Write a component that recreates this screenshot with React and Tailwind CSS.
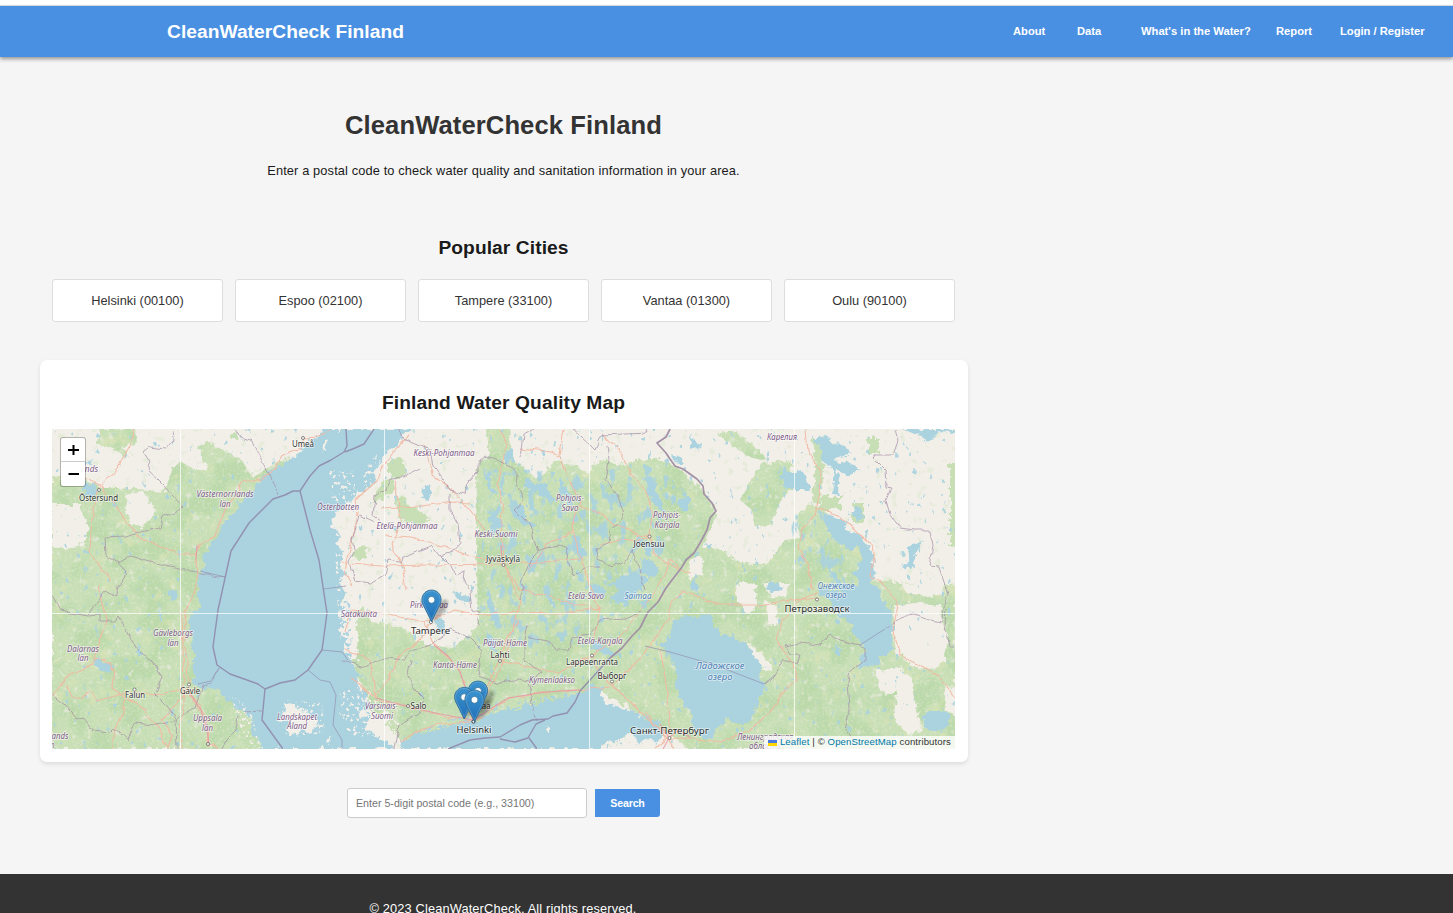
import React from "react";

const SANS = "font-['Liberation_Sans',Arial,sans-serif]";

const NAV = [
  { label: "About", width: "w-16" },
  { label: "Data", width: "w-16" },
  { label: "What's in the Water?", width: "w-[135px]" },
  { label: "Report", width: "w-16" },
  { label: "Login / Register", width: "w-[113px]" },
];

const CITIES = [
  "Helsinki (00100)",
  "Espoo (02100)",
  "Tampere (33100)",
  "Vantaa (01300)",
  "Oulu (90100)",
];

const GREEN_AREAS = [
  "M52 476L85 480L100 488L125 488L165 492L172 470L180 461L195 470L208 470L199 448L206 440L224 450L243 462L253 478L275 463L290 455L285 500L240 560L215 600L225 680L270 749L52 749Z",
  "M100 429L135 429L137 442L122 446L128 458L112 448L98 444Z",
  "M476 465L490 455L486 429L508 429L513 460L536 478L548 472L553 460L575 465L589 475L592 464L605 460L618 466L640 460L660 460L678 468L703 490L716 512L710 530L702 545L722 550L740 562L766 566L785 540L800 538L797 515L812 503L830 515L860 545L868 580L955 585L955 749L690 749L640 715L600 690L560 710L470 728L400 740L372 710L352 660L345 615L362 608L372 622L400 626L425 645L455 648L478 625Z",
  "M740 500L762 463L788 460L782 480L781 500L770 525L755 527L752 510Z",
  "M717 433L735 431L752 445L768 460L752 458L738 449Z",
  "M820 497h21v13h-21z",
  "M853 503h11v19h-11z",
  "M868 437h10v17h-10z",
  "M950 463h8v83h-8z",
  "M812 436L820 438L824 470L819 505L812 500L815 470Z",
  "M388 460L400 457L406 472L398 478L388 474Z",
  "M360 545L368 547L366 560L352 558Z",
  "M384 480L393 476L396 490L384 496L376 505L373 498Z",
  "M395 497L405 497L410 506L432 520L420 526L400 520Z",
  "M230 434L240 434L238 440L230 440Z",
  "M330 478L344 473L350 486L340 492L333 487Z",
  "M770 470L790 462L792 490L778 500Z",
];

const CREAM_HOLES = [
  "M52 505L80 505L89 530L84 542L70 549L52 545Z",
  "M127 494L144 492L156 515L142 526L132 526L126 510Z",
  "M735 583L756 583L757 605L748 614L737 600Z",
  "M766 600L778 607L776 626L768 624Z",
  "M765 583L790 583L786 596L770 597Z",
  "M895 606L914 602L940 605L946 640L945 660L935 669L918 668L898 655L893 630Z",
  "M876 670L900 668L912 680L914 700L922 728L912 736L900 728L894 712L898 690L888 695L879 690Z",
  "M945 688L956 686V713L946 712Z",
  "M745 640L768 660L772 670L760 668Z",
  "M901 583L943 583L944 596L924 597L903 592Z",
  "M690 560L704 555L702 575L688 580Z",
  "M343 612L356 612L358 660L350 662Z",
  "M640 725L655 722L660 749L642 749Z",
];

const GULF =
  "M323 429L318 438L303 447L295 457L286 461L281 466L273 467L268 474L262 478L256 484L252 492L245 494L243 502L238 506L235 513L228 516L226 523L220 526L222 533L212 541L208 550L202 556L204 566L199 574L199 588L197 596L203 606L198 610L192 612L190 620L192 632L191 645L195 658L192 668L195 675L191 682L196 687L207 689L220 690L224 698L232 702L236 708L248 712L251 722L252 733L260 742L262 749L400 749L403 741L412 736L425 733L438 731L448 726L460 724L466 720L476 722L484 716L496 714L502 710L514 711L526 705L538 705L545 700L558 699L574 695L582 694L588 686L593 682L596 690L604 684L600 696L604 703L618 707L634 711L640 717L650 718L660 724L663 736L656 742L650 738L640 744L636 738L628 733L620 740L606 742L598 749L398 749L370 732L364 726L372 718L366 710L374 706L364 700L368 694L358 690L358 680L362 674L354 668L350 658L344 650L346 640L340 632L344 622L340 612L342 600L346 592L340 585L345 574L340 566L343 552L335 543L340 533L332 525L334 513L344 508L352 500L358 492L370 487L376 480L374 472L383 462L385 452L396 446L400 440L412 429Z";

const LAKES = [
  "M685 614L697 618L704 613L712 617L715 627L722 633L733 638L745 643L752 652L758 661L761 670L760 680L766 687L762 696L757 701L756 711L749 723L742 725L733 720L725 718L721 727L715 729L713 738L706 740L699 736L694 728L690 714L684 704L678 694L675 684L679 675L675 668L672 656L663 650L660 645L667 640L669 632L674 628L670 622L680 619Z",
  "M820 512L832 516L845 523L850 532L862 537L868 546L874 553L872 563L875 574L871 582L879 590L883 602L890 612L894 630L890 640L893 650L886 655L880 656L876 666L868 665L860 668L859 660L865 651L860 640L852 633L854 625L842 617L832 607L829 600L820 594L817 590L824 588L836 590L842 594L834 580L826 566L840 578L852 588L859 583L853 575L859 566L862 558L856 546L846 552L838 540L832 538Z",
  "M902 429H955V433L937 432L935 438L927 442L921 435L908 432Z",
  "M782 467L790 472L803 470L806 480L812 490L798 490L784 488L781 478Z",
  "M815 437L829 436L832 442L842 445L851 454L840 457L833 461L855 464L860 470L850 476L838 470L828 467L820 458L822 452Z",
  "M832 465L839 475L838 495L833 494L835 480Z",
  "M908 547L918 543L924 540L914 555L915 562L911 569L903 568L908 560Z",
  "M923 722Q921 710 936 710Q951 710 950 722Q948 731 936 731Q925 731 923 722Z",
  "M855 506L860 508L863 518L858 520L852 513Z",
  "M485 468L491 474L490 484L496 494L490 493Z",
  "M505 452L514 447L512 463L504 465Z",
  "M488 519L498 506L502 500L498 516L504 528L494 530Z",
  "M514 499L526 510L522 516L538 526L530 527L515 517Z",
  "M525 478L545 486L556 501L550 503L540 494L524 487Z",
  "M560 478L568 490L574 505L568 503L560 492Z",
  "M573 532L580 544L588 555L582 560L573 549Z",
  "M486 585L490 595L494 610L500 622L492 620L488 604Z",
  "M486 630L494 638L498 655L492 652L487 642Z",
  "M422 491L428 483L432 494L428 500L424 499Z",
  "M645 477L654 480L659 498L665 512L658 508L648 497Z",
  "M646 537L655 545L650 558L644 553Z",
  "M672 455L681 459L683 465L675 463Z",
  "M690 435L700 445L699 450L691 445Z",
  "M680 499L690 496L689 508L684 513L679 506Z",
  "M640 560L650 561L660 568L655 577L643 574Z",
  "M610 585L625 575L638 571L648 580L634 597L620 605L610 597L622 590Z",
  "M585 582L600 586L606 596L596 594Z",
  "M594 640L606 645L618 656L600 654L592 648Z",
  "M545 586L552 596L556 610L549 604Z",
  "M93 660L98 657L103 663L113 666L111 674L104 672L98 668Z",
  "M80 481L92 483L97 490L92 497L84 492Z",
  "M167 593L178 590L180 597L172 602Z",
  "M690 581L696 580L699 592L692 590Z",
  "M640 602L646 599L649 607L641 610Z",
  "M835 644L842 650L840 656L834 652Z",
  "M768 583L780 583L781 590L772 592L767 588Z",
  "M436 618L446 621L444 634L437 629Z",
  "M454 592L470 596L470 604L460 602Z",
  "M158 600L160 612L163 625L158 617Z",
  "M138 642L141 655L137 655Z",
];

const ISLANDS = [
  "M286 705L295 703L300 710L308 712L318 722L310 734L302 729L296 736L285 730L290 720L277 722L284 714Z",
  "M324 438L328 440L327 448L322 453L324 446Z",
  "M352 500L358 498L354 506Z",
  "M358 712L364 708L367 714L360 719Z",
  "M370 722L378 720L380 727L372 727Z",
  "M326 738L331 736L331 741L327 742Z",
  "M380 715L388 712L390 720L383 722Z",
  "M545 726L549 729L548 733L545 730Z",
];

const ROADS = [
  "M330 429L318 437L304 438L300 448L283 455L275 468L263 478L242 482L236 495L226 508L219 525L215 535L199 545L196 556L197 580L192 598L186 612L184 640L187 660L188 682L190 692L200 705L207 720L209 746",
  "M85 478L98 483L104 492L115 505L125 520L137 535L150 542L166 548L180 554L196 554",
  "M135 429L128 450L118 467L106 480L98 490L92 520L90 550L96 562L110 578L110 582",
  "M98 585L101 600L106 620L100 640L95 660L84 670L68 675L60 685L54 697",
  "M66 684L72 698L80 698L90 692L97 701L112 697L125 692L140 693L155 695L170 692L188 688",
  "M96 658L110 664L114 672L112 688L126 697L122 716L114 732L112 749",
  "M127 697L145 710L158 728L168 749",
  "M182 613L184 684L182 720L180 749",
  "M187 690L162 720L172 735L168 749",
  "M188 691L199 710L205 720L209 744L218 749",
  "M500 429L506 445L502 465L498 485L503 510L501 535L503 560L510 578L520 600L515 620L510 640L505 660L492 685L473 720",
  "M410 434L395 450L384 465L378 480L355 500L358 515L352 540L345 570L352 587",
  "M425 445L432 475L440 481L455 493L470 510L485 530",
  "M380 508L420 506L455 502L470 503",
  "M394 480L398 500L401 522L392 545L402 565L406 590",
  "M384 535L410 537L440 545L470 556L500 562",
  "M342 562L380 566L430 565L500 564L540 562L580 560",
  "M503 563L520 590L545 595L560 600L585 605L600 610",
  "M564 429L560 455L570 480L580 500L572 525L578 550L585 570L592 590L600 612L594 640",
  "M520 448L545 451L560 456",
  "M580 505L605 515L612 524L640 535L650 537",
  "M603 433L622 455L632 475L645 490L652 515L650 535L655 555L675 568L690 573",
  "M572 532L545 545L540 555L528 570",
  "M600 545L620 540L650 538",
  "M425 622L430 635L434 645L448 658L460 672L466 690L472 720",
  "M431 624L420 640L400 655L388 680L376 697",
  "M375 700L405 706L430 713L455 718L473 721",
  "M473 721L490 712L508 698L520 697L545 692L578 690L610 687",
  "M473 720L485 695L495 670L500 660L505 640L520 620",
  "M500 660L530 667L560 672L593 655L618 640L640 610L660 585L670 560L682 570",
  "M345 632L352 610L384 614L425 622L455 610L480 615L510 612L560 613L600 608",
  "M345 650L370 660L376 697L350 678",
  "M400 741L430 725L470 722",
  "M593 655L600 675L612 685L640 712L668 735",
  "M612 685L635 664L655 640L668 620L672 602L682 590L720 605L760 605L790 600L818 598",
  "M660 648L664 670L668 700L670 720L668 735",
  "M668 740L690 738L720 742L750 730L770 712L785 690L798 678L790 660L776 640L782 620L800 600L818 592",
  "M806 429L808 450L821 472L818 500L815 515L802 528L798 548L810 570L812 590",
  "M818 508L838 515L855 530L872 545L874 560L870 575L885 587L898 605L893 630L900 655L920 665L940 678L950 690L955 698",
  "M668 738L660 730L645 712",
  "M668 738L676 749M668 738L655 749",
];

const BORDERS = [
  "M173 429L174 440L166 450L150 448L144 453L150 462L147 470L160 482L175 498L184 508L163 518L160 528L140 532L126 537L105 538L106 555L117 563L130 556L150 562L180 568L200 573L225 577",
  "M117 563L126 570L124 580L116 590L117 597L105 592L94 607L88 614",
  "M52 595L60 610L88 615L100 614L100 621L117 621L118 615L130 635L137 650L152 660L162 676L157 690L154 693L168 707L176 720L177 749",
  "M52 695L65 705L76 718L82 717L92 730L110 732L114 728L128 740L135 723L155 725L172 722L182 714L195 708L203 684L212 682L219 668",
  "M235 429L240 438L252 442L262 462L270 478L279 495",
  "M244 712L262 711M238 715L236 730L228 738L222 749",
  "M398 429L405 440L420 446L430 449L433 466L443 480L450 490L465 494L467 482L478 470L478 462L485 456L503 463L515 469L518 475L517 485L524 500L515 510L525 520L532 530L534 540L538 552L530 560L524 575L520 582L524 590L520 600",
  "M420 468L408 474L404 477L390 478L386 490L375 497L373 515L384 523",
  "M450 493L450 510L458 525L460 543L452 552L440 556L433 546L415 553L402 558L400 562L388 560L385 575L370 584L355 582L350 560L354 550L352 540L360 516L375 523",
  "M440 555L450 565L455 575L465 570L464 582L470 590L472 610L480 612L478 625",
  "M520 457L523 435L533 429M572 429L590 445L595 450L602 435L648 433L647 429",
  "M607 445L609 460L606 480L617 495L623 510L624 518L610 530L608 543L597 550L598 560L612 567L625 562L632 550L640 572L645 590",
  "M538 552L545 547L560 545L568 548L567 560L575 575L588 567L600 567",
  "M411 660L408 675L415 690L425 700L420 712L400 725L395 749",
  "M340 660L365 667L375 662L388 658L405 660L410 650L430 645L450 630L470 638L482 650L478 675L500 683L520 680L528 682L530 690",
  "M530 690L533 710L536 720M528 625L525 640L525 660L540 672L533 680L531 690",
  "M528 637L550 640L555 650L568 650L572 638L590 635L600 620L625 618L640 612",
  "M895 429L898 441L893 455L875 455L873 458L885 470L886 487L891 488L886 500L890 515L900 529L915 531L930 531L933 545L930 566L939 567L943 580L948 595L943 607L942 622L930 620L922 618L912 614L900 618L885 629",
  "M785 646L800 643L820 645L830 636L850 643L860 645L865 649L865 660L850 672L848 680L850 710L845 730L855 740",
  "M785 646L790 655L800 655L797 665L783 660L775 675L765 683",
  "M946 610L945 625L950 648L955 648",
];

const SEA_BORDERS = [
  "M346 429L347 446L344 452L331 460L319 466L310 476L300 491L293 491L285 495L273 499L249 523L231 551L218 610L213 647L217 665L230 674L247 680L258 684L265 689L262 720L283 749",
  "M374 429L364 444L355 448L345 452",
  "M300 491L310 530L319 560L323 587L327 613L322 650L308 670L295 680L280 683L265 689",
  "M448 749L470 740L485 738L500 737L520 725L532 720L548 719L553 716L567 713L575 702L580 691L590 680L610 658",
  "M500 739L515 742L528 738L536 724L545 720",
  "M529 738L537 749",
];

const THIN_SEA = [
  "M308 670L320 680L330 682L336 695L333 725L342 740L342 749",
  "M225 577L200 571M198 684L211 681L219 668",
  "M324 589L346 586M322 650L342 652L348 660",
  "M645 646L670 652L715 665L764 684L775 675",
  "M860 645L885 629",
];

const LABELS = [
  ["Umeå", 303, 447, 22, "city"],
  ["Östersund", 98.500, 501, 39, "city"],
  ["Falun", 135, 698, 20, "city"],
  ["Gävle", 190, 693.500, 20, "city"],
  ["Jyväskylä", 503, 562, 34, "city"],
  ["Joensuu", 649, 547, 31, "city"],
  ["Lahti", 500, 658, 19, "city"],
  ["Lappeenranta", 592, 665, 52, "city"],
  ["Выборг", 612, 678.500, 29, "city"],
  ["Salo", 418.500, 709, 16, "city"],
  ["Vantaa", 478, 709, 25, "city"],
  ["Tampere", 430.500, 633.500, 39, "town"],
  ["Helsinki", 474, 733, 35, "town"],
  ["Петрозаводск", 817, 611.500, 65, "town"],
  ["Санкт-Петербург", 669.500, 734, 79, "town"],
  ["Västernorrlands", 225, 497, 57, "area"],
  ["län", 225, 507, 11, "area"],
  ["Gävleborgs", 173, 636, 40, "area"],
  ["län", 173, 646, 11, "area"],
  ["Dalarnas", 83, 651.500, 32, "area"],
  ["län", 83, 661, 11, "area"],
  ["Uppsala", 207.500, 721, 29, "area"],
  ["län", 207.500, 730.500, 11, "area"],
  ["Landskapet", 297, 719.500, 40, "area"],
  ["Åland", 297, 729, 20, "area"],
  ["Österbotten", 338, 510, 42, "area"],
  ["Keski-Pohjanmaa", 444, 455.500, 61, "area"],
  ["Etelä-Pohjanmaa", 407, 528.500, 61, "area"],
  ["Keski-Suomi", 496, 537, 43, "area"],
  ["Pohjois-", 570, 501, 28, "area"],
  ["Savo", 570, 510.500, 17, "area"],
  ["Pohjois-", 667, 518, 28, "area"],
  ["Karjala", 667, 527.500, 25, "area"],
  ["Карелия", 782, 440, 30, "area"],
  ["Pirkanmaa", 429, 607.500, 38, "area"],
  ["Satakunta", 359, 617, 36, "area"],
  ["Etelä-Savo", 586, 598.500, 36, "area"],
  ["Päijät-Häme", 505, 645.500, 44, "area"],
  ["Etelä-Karjala", 600, 643.500, 45, "area"],
  ["Kanta-Häme", 455, 667.500, 44, "area"],
  ["Kymenlaakso", 552, 683, 46, "area"],
  ["Varsinais-", 381.500, 709, 33, "area"],
  ["Suomi", 382, 718.500, 22, "area"],
  ["Ленинградская", 765, 739.500, 56, "area"],
  ["область", 765, 748.500, 32, "area"],
  ["Saimaa", 638, 598.500, 27, "lake"],
  ["Ладожское", 720, 668.500, 49, "biglake"],
  ["озеро", 720, 680, 25, "biglake"],
  ["Онежское", 836, 588.500, 37, "lake"],
  ["озеро", 836, 598, 21, "lake"],
  ["lands", 88, 471.500, 20, "area"],
  ["lands", 59, 739, 19, "area"],
  ["län", 50, 748, 9, "area"],
];

const LABEL_STYLE = {
  city: "fill-[#303030] text-[8.3px]",
  town: "fill-[#2b2b2b] text-[9.400px]",
  area: "fill-[#7d5a87] text-[8.400px] italic",
  lake: "fill-[#4d80b3] text-[8.400px] italic",
  biglake: "fill-[#4d80b3] text-[9.600px] italic",
};

const DOTS = [
  [303, 438], [99, 490], [134.500, 689.500], [189, 684.500], [503.500, 565],
  [649.500, 536.500], [500, 661], [592, 655.500], [612, 681.500], [408, 706],
  [817, 599.500], [669.500, 738], [208, 744],
];

const MARKERS = [
  [421.500, 589.700],
  [468, 680.700],
  [454.200, 687],
  [464.500, 689.700],
];

const speckle = (id, freq, seed, color, gain, cut, octaves = 3) => (
  <filter id={id} filterUnits="userSpaceOnUse" x="52" y="429" width="903" height="320" colorInterpolationFilters="sRGB">
    <feTurbulence type="fractalNoise" baseFrequency={freq} numOctaves={octaves} seed={seed} result="n" />
    <feColorMatrix in="n" type="matrix" values={`0 0 0 0 0  0 0 0 0 0  0 0 0 0 0  ${gain} 0 0 0 ${-cut}`} result="a" />
    <feFlood floodColor={color} />
    <feComposite operator="in" in2="a" result="c" />
    <feComposite operator="in" in="c" in2="SourceGraphic" />
  </filter>
);

function Marker({ x, y }) {
  return (
    <g transform={`translate(${x} ${y}) scale(0.8)`}>
      <path
        d="M12.500 0.500C5.800 0.500 0.500 5.800 0.500 12.300C0.500 15.800 2 19 3.600 22L12.500 40L21.400 22C23 19 24.500 15.800 24.500 12.300C24.500 5.800 19.200 0.500 12.500 0.500Z"
        fill="url(#pin)"
        stroke="#2e6c97"
        strokeWidth="1.1"
      />
      <path
        d="M12.500 1.700C6.500 1.700 1.700 6.500 1.700 12.300C1.700 15.500 3.100 18.500 4.700 21.500L12.500 37.300L20.300 21.500C21.900 18.500 23.300 15.500 23.300 12.300C23.300 6.500 18.500 1.700 12.500 1.700Z"
        fill="none"
        stroke="#ffffff"
        strokeOpacity="0.2"
        strokeWidth="1.1"
      />
      <circle cx="12.500" cy="12.700" r="4.300" fill="#ffffff" stroke="#2e6c97" strokeWidth="0.9" />
    </g>
  );
}

function FinlandMap() {
  return (
    <svg viewBox="52 429 903 320" width="903" height="320" className="block">
      <defs>
        <linearGradient id="pin" x1="0" y1="0" x2="0" y2="1">
          <stop offset="0" stopColor="#3d94cf" />
          <stop offset="1" stopColor="#1f6fb8" />
        </linearGradient>
        <filter id="rough" filterUnits="userSpaceOnUse" x="40" y="420" width="930" height="340">
          <feTurbulence type="fractalNoise" baseFrequency="0.16" numOctaves="3" seed="4" />
          <feDisplacementMap in="SourceGraphic" scale="9" xChannelSelector="R" yChannelSelector="G" />
        </filter>
        <filter id="wiggle" filterUnits="userSpaceOnUse" x="40" y="420" width="930" height="340">
          <feTurbulence type="fractalNoise" baseFrequency="0.09" numOctaves="2" seed="9" />
          <feDisplacementMap in="SourceGraphic" scale="6" xChannelSelector="R" yChannelSelector="G" />
        </filter>
        <filter id="soft" x="-50%" y="-50%" width="200%" height="200%">
          <feGaussianBlur stdDeviation="1.4" />
        </filter>
        {speckle("sCream", "0.14", 3, "#f2efe9", 5, 3.15)}
        {speckle("sDark", "0.035", 8, "#b9d9a9", 5, 2.2)}
        {speckle("sYellow", "0.06", 21, "#e6e6b4", 6, 3.7)}
        {speckle("sGrain", "0.4", 13, "#dfe8cb", 4, 2)}
        {speckle("sPond", "0.17 0.12", 31, "#aad3df", 14, 9.9)}
        {speckle("sLake", "0.11 0.065", 17, "#aad3df", 9, 5)}
        {speckle("sBush", "0.12", 41, "#d6e6c6", 8, 5.1)}
        {speckle("sIsle", "0.28", 25, "#f2efe9", 9, 5.2)}
        {speckle("sSea", "0.28", 52, "#aad3df", 12, 6.4)}
        <clipPath id="frame">
          <rect x="52" y="429" width="903" height="320" />
        </clipPath>
      </defs>
      <g clipPath="url(#frame)">
        <rect x="52" y="429" width="903" height="320" fill="#f2efe9" />
        <rect x="52" y="429" width="903" height="320" filter="url(#sBush)" opacity="0.4" />
        <g filter="url(#rough)" fill="#c8dfb6">
          {GREEN_AREAS.map((d) => <path key={d} d={d} />)}
        </g>
        {[["sDark", 0.85], ["sYellow", 0.4], ["sGrain", 0.45], ["sCream", 0.55]].map(([id, opacity]) => (
          <g key={id} filter={`url(#${id})`} opacity={opacity}>
            {GREEN_AREAS.slice(0, 5).map((d) => <path key={d} d={d} />)}
          </g>
        ))}
        <g filter="url(#rough)" fill="#f2efe9">
          {CREAM_HOLES.map((d) => <path key={d} d={d} />)}
        </g>
        <rect x="52" y="429" width="903" height="320" filter="url(#sPond)" opacity="0.9" />
        <g filter="url(#sLake)" opacity="0.9">
          <path d="M484 466L590 475L640 462L685 485L670 540L640 600L570 640L530 650L480 620Z" />
          <path d="M790 515L820 510L860 590L820 590L795 560Z" />
        </g>
        <g filter="url(#rough)" fill="#aad3df">
          {LAKES.map((d) => <path key={d} d={d} />)}
          <path d={GULF} />
        </g>
        <g filter="url(#sIsle)">
          <path d="M340 690L375 690L400 722L395 740L350 735L338 715Z" />
          <path d="M335 520L350 520L348 590L340 640L336 580Z" />
          <path d="M280 700L322 703L325 733L285 738Z" />
          <path d="M228 692L250 708L260 745L250 749L235 715Z" />
          <path d="M328 470L355 470L355 505L332 500Z" />
          <path d="M362 470L385 445L388 470L365 492Z" />
        </g>
        <g filter="url(#sSea)">
          <path d="M400 738L440 722L520 702L580 690L600 690L580 705L520 716L440 740L400 747Z" />
          <path d="M340 600L350 602L352 660L364 700L345 690Z" />
        </g>
        <g filter="url(#rough)" fill="#f2efe9">
          {ISLANDS.map((d) => <path key={d} d={d} />)}
        </g>
        <g filter="url(#wiggle)" fill="none" strokeLinejoin="round">
          <g stroke="#f2b8a2" strokeWidth="1.1" opacity="0.9">
            {ROADS.map((d) => <path key={d} d={d} />)}
          </g>
          <g stroke="#a58fa8" strokeWidth="0.9" opacity="0.8">
            {BORDERS.map((d) => <path key={d} d={d} />)}
          </g>
        </g>
        <g stroke="#e892a2" strokeWidth="1.1" fill="none" opacity="0.8">
          <path d="M434 645L448 656L460 672L466 690L473 719M376 698L405 706L440 714L473 720L508 698L545 692L580 690M188 690L201 710L207 730L209 744M197 546L196 560M502 562L501 545M660 724L669 738L663 749M669 738L678 730L690 737" />
        </g>
        <g fill="none" stroke="#9391b0" strokeLinejoin="round">
          <g strokeWidth="1.400">
            {SEA_BORDERS.map((d) => <path key={d} d={d} />)}
          </g>
          <path d="M610 658L622 648L632 636L640 628L648 612L658 602L666 588L672 580L682 567L686 560L694 553L700 543L707 530L710 518L716 511L712 503L704 494L703 486L697 479L690 474L683 469L675 466L670 459L666 453L657 443L666 437L670 429" stroke="#a391a6" strokeWidth="1.700" />
          <g strokeWidth="0.7">
            {THIN_SEA.map((d) => <path key={d} d={d} />)}
          </g>
        </g>
        {DOTS.map(([x, y]) => (
          <circle key={`${x}-${y}`} cx={x} cy={y} r="1.500" fill="#ffffff" stroke="#555555" strokeWidth="0.7" />
        ))}
        <path d="M180.500 429V749M384.500 429V749M589.500 429V749M794.500 429V749M52 613.500H955" stroke="#ffffff" strokeWidth="1" opacity="0.75" />
        <g className="font-['Noto_Sans','Open_Sans',sans-serif]" textAnchor="middle" stroke="#ffffff" strokeOpacity="0.6" strokeWidth="1.700" strokeLinejoin="round" paintOrder="stroke">
          {LABELS.map(([text, x, y, w, kind], i) => (
            <text key={i} x={x} y={y} textLength={w} lengthAdjust="spacingAndGlyphs" className={LABEL_STYLE[kind]}>
              {text}
            </text>
          ))}
        </g>
        {MARKERS.map(([x, y]) => (
          <path
            key={`s${x}`}
            d={`M${x + 10} ${y + 32}L${x + 15} ${y + 18}Q${x + 22} ${y + 7} ${x + 26} ${y + 11}Q${x + 27} ${y + 18} ${x + 20} ${y + 25}Z`}
            fill="#000000"
            opacity="0.28"
            filter="url(#soft)"
          />
        ))}
        <circle cx="431" cy="622" r="1.600" fill="#ffffff" stroke="#555555" strokeWidth="0.7" />
        <circle cx="473.500" cy="721.500" r="1.600" fill="#ffffff" stroke="#333333" strokeWidth="1" />
        {MARKERS.map(([x, y]) => <Marker key={x} x={x} y={y} />)}
      </g>
    </svg>
  );
}

function ZoomControl() {
  return (
    <div className="absolute left-2 top-2 flex w-[26px] flex-col overflow-hidden rounded-[3px] border border-black/25 bg-white bg-clip-padding">
      <button aria-label="Zoom in" className="flex h-6 items-center justify-center border-b border-[#cccccc]">
        <svg width="12" height="12" viewBox="0 0 12 12" stroke="#000000" strokeWidth="2">
          <path d="M1 6H12M6.500 1V11" />
        </svg>
      </button>
      <button aria-label="Zoom out" className="flex h-6 items-center justify-center">
        <svg width="12" height="12" viewBox="0 0 12 12" stroke="#000000" strokeWidth="2">
          <path d="M1.500 6H12" />
        </svg>
      </button>
    </div>
  );
}

export default function App() {
  return (
    <div className={`flex h-[913px] w-[1453px] flex-col overflow-hidden bg-[#f5f5f5] text-[12.8px] text-[#1a1a1a] ${SANS}`}>
      <div className="h-[6px] shrink-0 border-b border-[#dde3ea] bg-white" />
      <header className="flex h-[51px] shrink-0 items-center justify-between bg-[#4a90e2] pl-[167px] text-white shadow-[0_2px_4px_rgba(0,0,0,0.4)]">
        <div className="pt-px text-[19.2px] font-bold tracking-[0.04px]">CleanWaterCheck Finland</div>
        <nav className="flex text-[11.2px] font-bold">
          {NAV.map((item) => (
            <a key={item.label} className={`whitespace-nowrap ${item.width}`}>{item.label}</a>
          ))}
        </nav>
      </header>

      <main className="ml-10 flex w-[928px] shrink-0 flex-col">
        <section className="pr-px pt-[48px] text-center">
          <h1 className="text-[25.6px] font-bold leading-10 tracking-[0.1px] text-[#333333]">CleanWaterCheck Finland</h1>
          <p className="mt-4 leading-5 tracking-[0.13px]">Enter a postal code to check water quality and sanitation information in your area.</p>
        </section>

        <section className="mt-[53px] pl-3 pr-[13px] text-center">
          <h2 className="text-[19.2px] font-bold leading-7 tracking-[0.08px]">Popular Cities</h2>
          <div className="mt-[17px] grid grid-cols-5 gap-3">
            {CITIES.map((city) => (
              <div key={city} className="flex h-[43px] items-center justify-center rounded-[3px] border border-[#dddddd] bg-white text-[#333333]">
                {city}
              </div>
            ))}
          </div>
        </section>

        <section className="mt-[38px] h-[402px] rounded-[7px] bg-white pl-3 pr-[13px] pt-[29px] text-center shadow-[0_2px_4px_rgba(0,0,0,0.1)]">
          <h2 className="text-[19.2px] font-bold leading-7 tracking-[0.12px]">Finland Water Quality Map</h2>
          <div className="relative mt-3 h-[320px]">
            <FinlandMap />
            <ZoomControl />
            <div className="absolute bottom-0 right-0 flex h-[13px] items-center whitespace-pre bg-white/80 px-1 text-[9.6px] tracking-[0.11px] text-[#333333]">
              <svg width="9" height="6" viewBox="0 0 9 6" className="mr-[3px]">
                <path fill="#4c7be1" d="M0 0h9v3H0z" />
                <path fill="#ffd500" d="M0 3h9v3H0z" />
              </svg>
              <a className="text-[#0078a8]">Leaflet</a>
              <span> | © </span>
              <a className="text-[#0078a8]">OpenStreetMap</a>
              <span> contributors</span>
            </div>
          </div>
        </section>

        <form className="mt-[26px] flex items-center gap-2 pl-[307px]">
          <input
            className="h-[30px] w-[240px] rounded-[3px] border border-[#cccccc] bg-white px-2 text-[10.67px] placeholder:text-[#757575]"
            placeholder="Enter 5-digit postal code (e.g., 33100)"
          />
          <button type="button" className="h-7 w-[65px] rounded-r-[3px] bg-[#4a90e2] text-[10.67px] font-bold tracking-[-0.2px] text-white">Search</button>
        </form>
      </main>

      <footer className="mt-[56px] h-[60px] w-full shrink-0 bg-[#333333] pt-[25px] text-white">
        <p className="ml-10 w-[926px] text-center leading-5 tracking-[0.14px]">© 2023 CleanWaterCheck. All rights reserved.</p>
      </footer>
    </div>
  );
}
